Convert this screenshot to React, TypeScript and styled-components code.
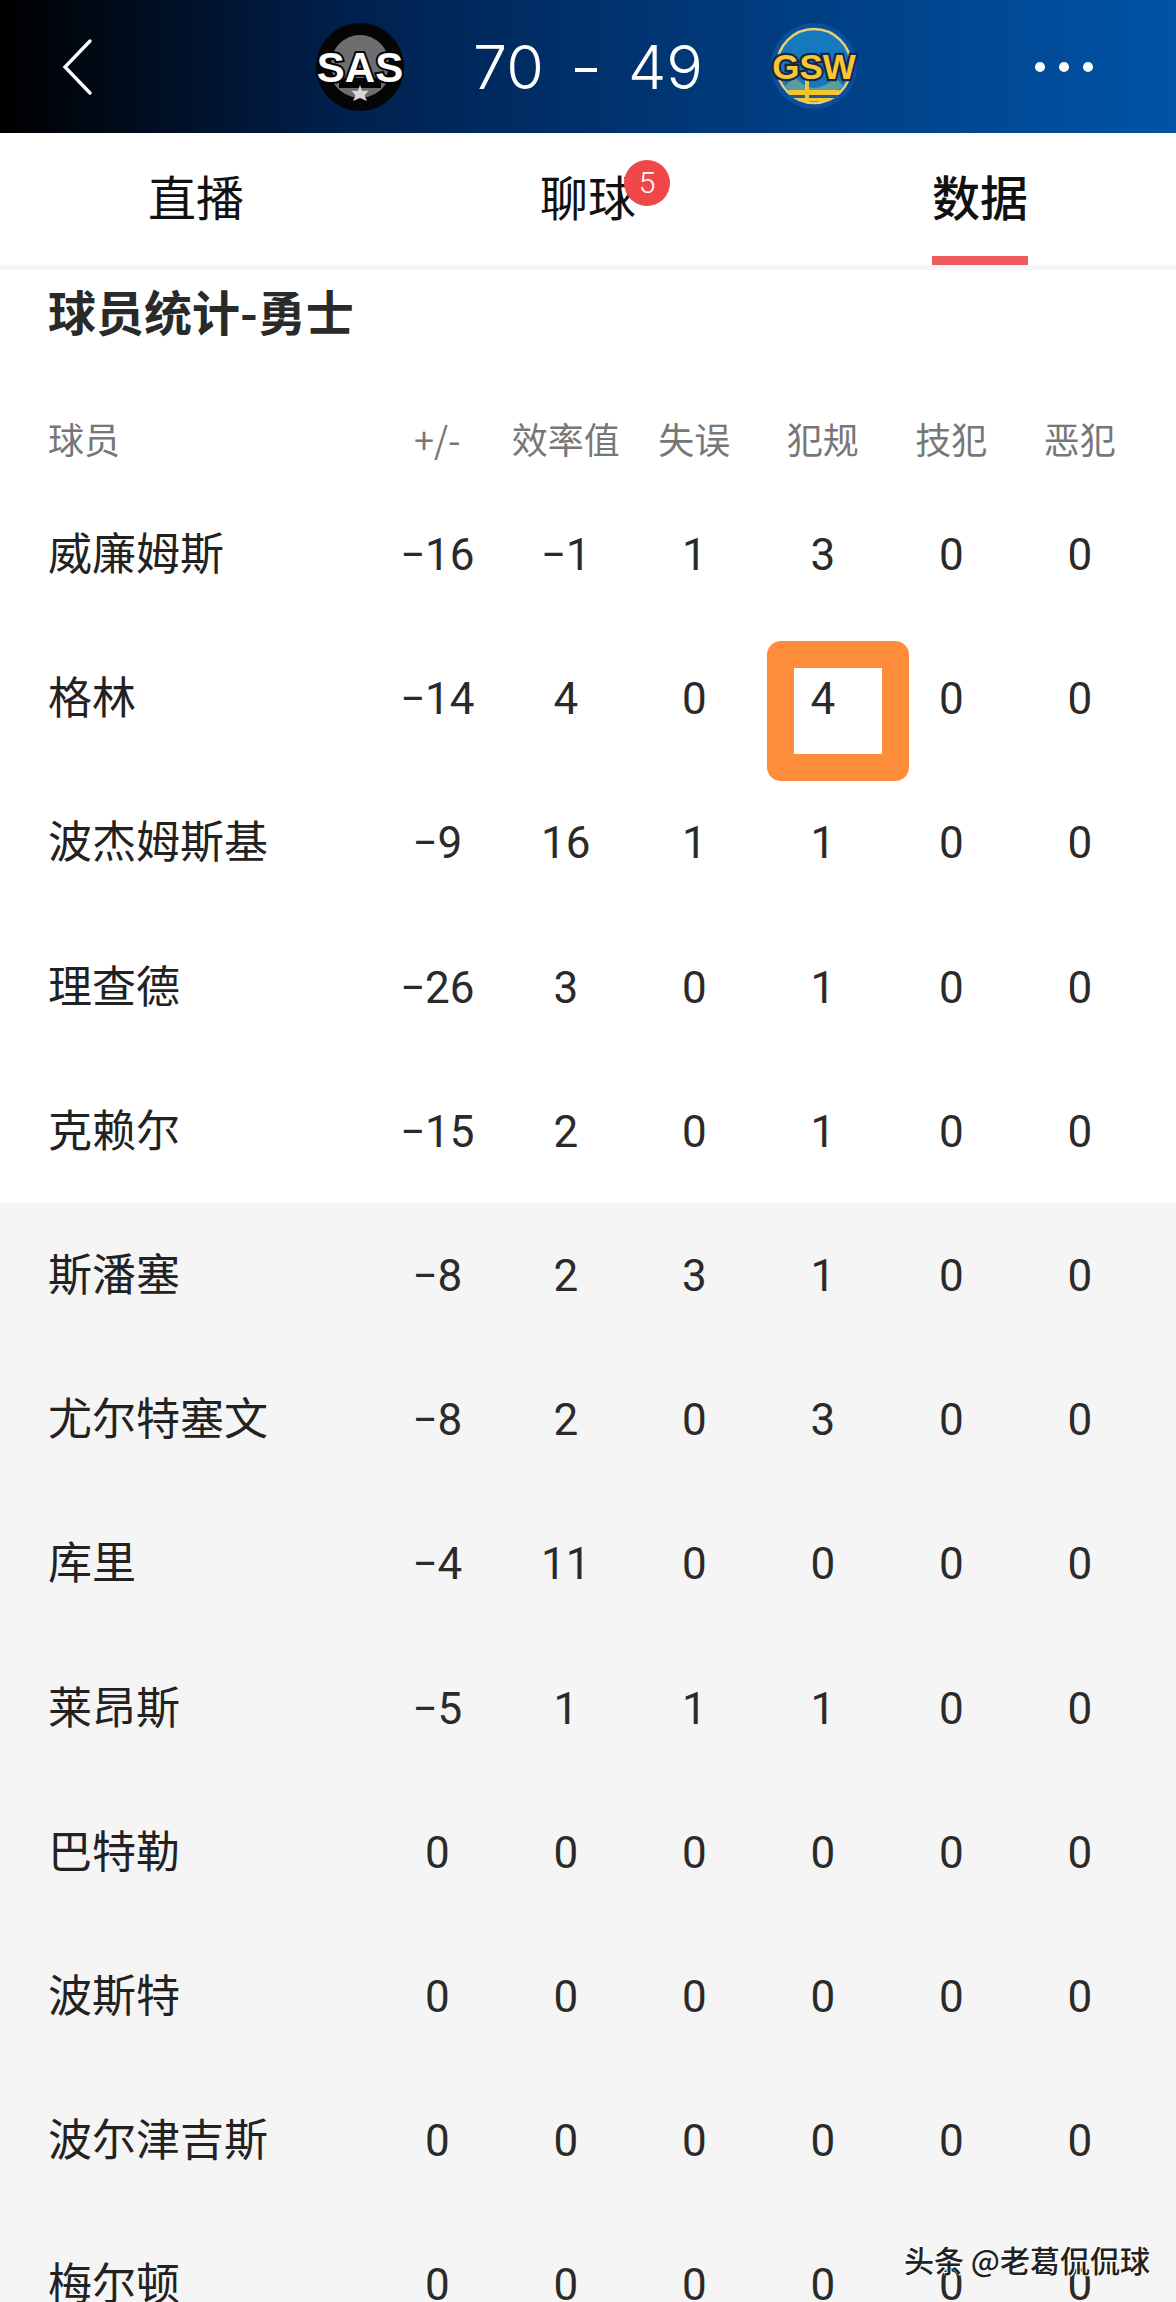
import React from 'react'
import styled, { createGlobalStyle } from 'styled-components'

const CJK = `"Noto Sans CJK SC", "Noto Sans", sans-serif`

const starters = [
  ['威廉姆斯', '−16', '−1', '1', '3', '0', '0'],
  ['格林', '−14', '4', '0', '4', '0', '0'],
  ['波杰姆斯基', '−9', '16', '1', '1', '0', '0'],
  ['理查德', '−26', '3', '0', '1', '0', '0'],
  ['克赖尔', '−15', '2', '0', '1', '0', '0'],
]

const bench = [
  ['斯潘塞', '−8', '2', '3', '1', '0', '0'],
  ['尤尔特塞文', '−8', '2', '0', '3', '0', '0'],
  ['库里', '−4', '11', '0', '0', '0', '0'],
  ['莱昂斯', '−5', '1', '1', '1', '0', '0'],
  ['巴特勒', '0', '0', '0', '0', '0', '0'],
  ['波斯特', '0', '0', '0', '0', '0', '0'],
  ['波尔津吉斯', '0', '0', '0', '0', '0', '0'],
  ['梅尔顿', '0', '0', '0', '0', '0', '0'],
]

const columns = ['+/-', '效率值', '失误', '犯规', '技犯', '恶犯']

const SasLogo = () => (
  <svg width="90" height="90" viewBox="0 0 90 90">
    <circle cx="45" cy="45" r="44" fill="#050505" />
    <circle cx="45" cy="42" r="29" fill="#6e6e70" />
    <path d="M18 60 A31 31 0 0 0 72 60 L62 60 A20 20 0 0 1 28 60 Z" fill="#6e6e70" />
    <rect x="24" y="56" width="42" height="10" fill="#050505" />
    <text x="45" y="60" textAnchor="middle" fontFamily="Liberation Sans" fontWeight="700" fontSize="42" fill="#fff" stroke="#050505" strokeWidth="4" paintOrder="stroke">SAS</text>
    <polygon points="45,63 47.2,69 53.5,68.5 49.5,73.5 52,79 45,76 38,79 40.5,73.5 36.5,68.5 42.8,69" fill="#d8d8d8" />
  </svg>
)

const GswLogo = () => (
  <svg width="90" height="90" viewBox="0 0 90 90">
    <circle cx="43" cy="44" r="43" fill="#0a4f9e" />
    <circle cx="43" cy="44" r="37" fill="#1679bd" stroke="#e5d078" strokeWidth="2.5" />
    <path d="M14 64 L24 55 Q34 66 43 66 Q54 66 64 55 L72 64 Q60 78 43 80 Q26 78 14 64 Z" fill="#5b9d9a" />
    <path d="M17 68 H69 Q64 76 56 79 H30 Q22 76 17 68 Z" fill="#f5c431" />
    <rect x="18" y="73" width="50" height="3" fill="#1d5a95" />
    <rect x="34" y="58" width="4" height="22" fill="#f5c431" />
    <text x="43" y="57" textAnchor="middle" fontFamily="Liberation Sans" fontWeight="700" fontSize="35" fill="#f9c72f" stroke="#16264f" strokeWidth="4.5" paintOrder="stroke">GSW</text>
  </svg>
)

const App = () => {
  return (
    <Page>
      <GlobalStyle />
      <TopBar>
        <BackButton>
          <svg width="32" height="58" viewBox="0 0 32 58">
            <path d="M29 3 L4 29 L29 55" fill="none" stroke="#fff" strokeWidth="3.4" strokeLinecap="round" strokeLinejoin="miter" />
          </svg>
        </BackButton>
        <ScoreBoard>
          <SasLogo />
          <Score>
            <span>70</span>
            <ScoreDash />
            <span>49</span>
          </Score>
          <GswLogo />
        </ScoreBoard>
        <MoreDots>
          <Dot />
          <Dot />
          <Dot />
        </MoreDots>
      </TopBar>

      <Tabs>
        <Tab>直播</Tab>
        <Tab>
          聊球
          <Badge>5</Badge>
        </Tab>
        <Tab $active>数据</Tab>
      </Tabs>

      <Title>球员统计-勇士</Title>

      <HeadRow>
        <HeadName>球员</HeadName>
        {columns.map((c) => (
          <HeadCell key={c}>{c}</HeadCell>
        ))}
      </HeadRow>

      {starters.map((row) => (
        <Row key={row[0]}>
          <Name>{row[0]}</Name>
          {row.slice(1).map((v, i) => (
            <Cell key={i}>
              {v}
              {row[0] === '格林' && i === 3 && <Highlight />}
            </Cell>
          ))}
        </Row>
      ))}

      <Bench>
        {bench.map((row) => (
          <Row key={row[0]}>
            <Name>{row[0]}</Name>
            {row.slice(1).map((v, i) => (
              <Cell key={i}>{v}</Cell>
            ))}
          </Row>
        ))}
      </Bench>

      <Watermark>头条 @老葛侃侃球</Watermark>
    </Page>
  )
}

export default App

const GlobalStyle = createGlobalStyle`
  html, body {
    margin: 0;
    padding: 0;
    background: #fff;
  }
`

const Page = styled.div`
  position: relative;
  width: 1176px;
  height: 2302px;
  overflow: hidden;
  background: #fff;
  font-family: ${CJK};
  color: #222;
`

const TopBar = styled.div`
  display: flex;
  align-items: center;
  justify-content: space-between;
  box-sizing: border-box;
  height: 133px;
  padding: 0 83px 0 61px;
  background: linear-gradient(90deg, #000 0%, #00214f 30%, #003a7c 62%, #0053a6 100%);
`

const BackButton = styled.div`
  display: flex;
  width: 32px;
`

const ScoreBoard = styled.div`
  display: flex;
  align-items: center;
  gap: 68px;
  margin-left: 48px;
`

const Score = styled.div`
  display: flex;
  align-items: center;
  gap: 31px;
  font-family: Inter, sans-serif;
  font-weight: 300;
  font-size: 61px;
  color: #fff;
`

const ScoreDash = styled.div`
  width: 22px;
  height: 4px;
  margin-top: 6px;
  background: #fff;
`

const MoreDots = styled.div`
  display: flex;
  gap: 14px;
`

const Dot = styled.div`
  width: 10px;
  height: 10px;
  border-radius: 50%;
  background: #fff;
`

const Tabs = styled.div`
  display: grid;
  grid-template-columns: repeat(3, 392px);
  height: 132px;
  border-bottom: 5px solid #f6f6f6;
`

const Tab = styled.div<{ $active?: boolean }>`
  position: relative;
  justify-self: center;
  align-self: stretch;
  display: flex;
  align-items: center;
  padding-bottom: 8px;
  font-size: 48px;
  font-weight: ${(p) => (p.$active ? 500 : 400)};
  color: #111;
  ${(p) =>
    p.$active &&
    `&::after {
      content: '';
      position: absolute;
      left: 0;
      right: 0;
      bottom: 0;
      height: 9px;
      background: #ee5a5e;
    }`}
`

const Badge = styled.span`
  position: absolute;
  top: 27px;
  right: -34px;
  width: 46px;
  height: 46px;
  border-radius: 50%;
  background: #f04848;
  color: #fff;
  font-family: Roboto, sans-serif;
  font-weight: 300;
  font-size: 30px;
  line-height: 46px;
  text-align: center;
`

const Title = styled.div`
  box-sizing: border-box;
  height: 126px;
  padding: 10px 0 0 48px;
  font-size: 48px;
  line-height: 60px;
  font-weight: 700;
  color: #2a2a2a;
`

const HeadRow = styled.div`
  display: flex;
  align-items: center;
  height: 84px;
  padding: 0 32px 2px 48px;
  color: #777;
  font-size: 36px;
`

const HeadName = styled.div`
  flex: 1;
`

const HeadCell = styled.div`
  width: 128.5px;
  text-align: center;
  white-space: nowrap;
`

const Row = styled.div`
  display: flex;
  align-items: center;
  height: 144.2px;
  padding: 0 32px 0 48px;
  font-size: 44px;
`

const Name = styled.div`
  flex: 1;
  padding-bottom: 6px;
  color: #222;
`

const Cell = styled.div`
  position: relative;
  width: 128.5px;
  padding-top: 2px;
  text-align: center;
  color: #2a2a2a;
  font-family: Roboto, sans-serif;
  font-size: 44px;
`

const Highlight = styled.span`
  position: absolute;
  left: 8px;
  top: -30px;
  box-sizing: border-box;
  width: 142px;
  height: 140px;
  border: 27px solid #ff8c3a;
  border-radius: 14px;
`

const Bench = styled.div`
  background: #f5f5f5;
`

const Watermark = styled.div`
  position: absolute;
  left: 904px;
  top: 2239px;
  font-size: 30px;
  line-height: 40px;
  font-weight: 500;
  color: #222;
  text-shadow: 1px 1px 0 #fff, -1px -1px 0 #fff;
  white-space: nowrap;
`
